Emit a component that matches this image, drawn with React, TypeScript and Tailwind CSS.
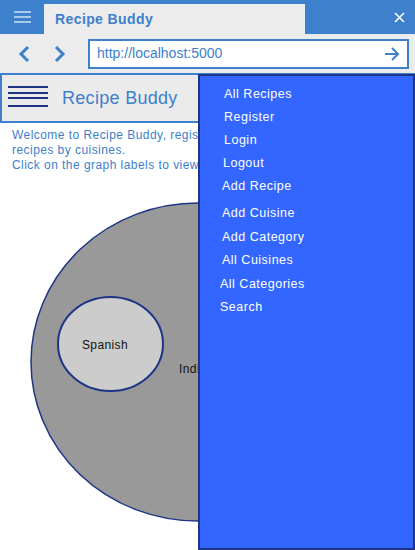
import React from 'react'

const menu = [
  { label: 'All Recipes', cls: 'pl-[24px]' },
  { label: 'Register', cls: 'pl-[24px]' },
  { label: 'Login', cls: 'pl-[24px]' },
  { label: 'Logout', cls: 'pl-[23px]' },
  { label: 'Add Recipe', cls: 'pl-[22px]' },
  { label: 'Add Cuisine', cls: 'pl-[22px] mt-[4px]' },
  { label: 'Add Category', cls: 'pl-[22px] mt-[1px]' },
  { label: 'All Cuisines', cls: 'pl-[22px]' },
  { label: 'All Categories', cls: 'pl-[20px] mt-[1px]' },
  { label: 'Search', cls: 'pl-[20px]' },
]

export default function App() {
  return (
    <div className="relative w-[415px] h-[550px] overflow-hidden bg-white font-['Liberation_Sans',Arial,sans-serif]">
      {/* BROWSER CHROME */}
      <div className="flex items-end h-[34px] bg-[#3d80cc]">
        <div className="w-[44px] h-full flex flex-col items-center justify-center gap-[3px]">
          <span className="block w-[17px] h-[2px] bg-[#a9c9ee]" />
          <span className="block w-[17px] h-[2px] bg-[#a9c9ee]" />
          <span className="block w-[17px] h-[2px] bg-[#a9c9ee]" />
        </div>
        <div className="w-[261px] h-[30px] bg-[#ececec] flex items-center pl-[11px]">
          <span className="text-[14px] font-bold text-[#3d80cc] tracking-[0.4px]">Recipe Buddy</span>
        </div>
        <div className="flex-1 h-full flex items-center justify-end pr-[10px]">
          <svg width="11" height="11" viewBox="0 0 11 11">
            <path d="M1 1 L10 10 M10 1 L1 10" stroke="white" strokeWidth="1.6" />
          </svg>
        </div>
      </div>
      <div className="flex items-center h-[41px] bg-[#ececec] border-b-[2px] border-[#3d80cc]">
        <div className="w-[88px] flex items-center">
          <svg className="ml-[18px]" width="12" height="18" viewBox="0 0 12 18">
            <path d="M10 2 L3 9 L10 16" fill="none" stroke="#3d80cc" strokeWidth="3" />
          </svg>
          <svg className="ml-[24px]" width="12" height="18" viewBox="0 0 12 18">
            <path d="M2 2 L9 9 L2 16" fill="none" stroke="#3d80cc" strokeWidth="3" />
          </svg>
        </div>
        <div className="w-[321px] h-[30px] bg-white border-[2px] border-[#3d80cc] flex items-center justify-between pl-[7px] pr-[7px]">
          <span className="text-[14px] text-[#3d80cc]">http://localhost:5000</span>
          <svg width="16" height="14" viewBox="0 0 16 14">
            <path d="M1 7 H14 M8 1 L14 7 L8 13" fill="none" stroke="#3d80cc" strokeWidth="2" />
          </svg>
        </div>
      </div>

      {/* PAGE HEADER */}
      <div className="flex items-center h-[48px] bg-[#ebebeb] border-l-[2px] border-b-[2px] border-[#3d80cc]">
        <div className="ml-[6px] mb-[4px] w-[40px] flex flex-col">
          <span className="block h-[2px] bg-[#1e3586]" />
          <span className="block h-[2px] bg-[#1e3586] mt-[4px]" />
          <span className="block h-[2px] bg-[#1e3586] mt-[3px]" />
          <span className="block h-[2px] bg-[#1e3586] mt-[6px]" />
        </div>
        <span className="ml-[14px] text-[18px] text-[#3d80cc] tracking-[0.3px]">Recipe Buddy</span>
      </div>

      {/* WELCOME */}
      <div className="pl-[12px] pt-[5px] text-[12px] leading-[15px] text-[#3d80cc] tracking-[0.45px] whitespace-nowrap">
        <p>Welcome to Recipe Buddy, register and add your favourite</p>
        <p>recipes by cuisines.</p>
        <p>Click on the graph labels to view the recipes.</p>
      </div>

      {/* GRAPH */}
      <svg width="415" height="377" viewBox="0 173 415 377" className="block">
        <ellipse cx="198" cy="362" rx="167" ry="159" fill="#999999" stroke="#1e3586" strokeWidth="1.5" />
        <ellipse cx="110.5" cy="344" rx="52.5" ry="47" fill="#cccccc" stroke="#1e3586" strokeWidth="2" />
        <text x="105" y="349" textAnchor="middle" fontSize="12" fill="#111" letterSpacing="0.4" fontFamily="Liberation Sans, Arial, sans-serif">Spanish</text>
        <text x="179" y="373" fontSize="12" fill="#111" letterSpacing="0.4" fontFamily="Liberation Sans, Arial, sans-serif">Indian</text>
      </svg>

      {/* DRAWER */}
      <div className="absolute left-[198px] top-[74px] w-[217px] h-[476px] bg-[#3366ff] border-[2px] border-[#1e3586] pt-[7px]">
        <ul className="flex flex-col">
          {menu.map((m) => (
            <li key={m.label} className={`h-[23px] flex items-center text-[12.5px] leading-[15px] text-white tracking-[0.5px] ${m.cls}`}>
              {m.label}
            </li>
          ))}
        </ul>
      </div>
    </div>
  )
}
